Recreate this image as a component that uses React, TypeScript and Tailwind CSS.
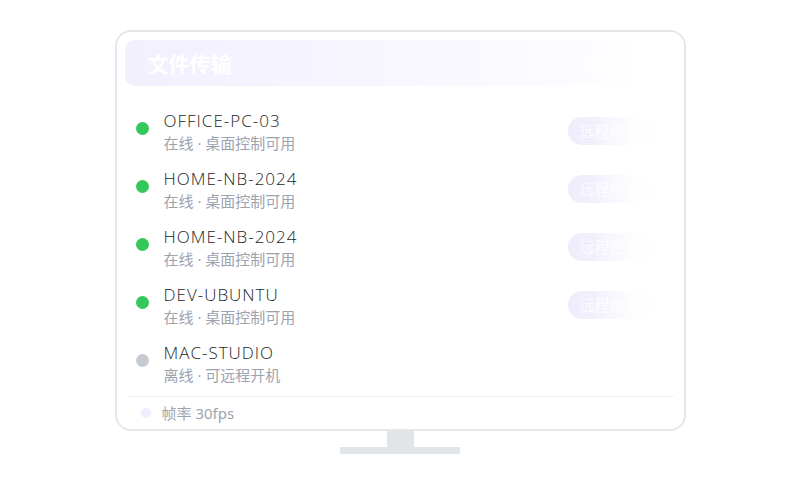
const devices = [
  { name: 'OFFICE-PC-03', online: true },
  { name: 'HOME-NB-2024', online: true },
  { name: 'HOME-NB-2024', online: true },
  { name: 'DEV-UBUNTU', online: true },
  { name: 'MAC-STUDIO', online: false },
];

const font = { fontFamily: '"Noto Sans", "Noto Sans CJK SC", sans-serif' };

export default function App() {
  return (
    <div className="w-[800px] h-[500px] bg-white flex flex-col items-center pt-[30px]" style={font}>
      <div className="relative w-[571px] h-[401px] border-2 border-[#e5e7eb] rounded-[16px] bg-white flex flex-col px-[8px] pt-[8px] overflow-hidden">
        <div className="h-[46px] rounded-[10px] bg-gradient-to-r from-[#f3f0fe] via-[#f8f6ff] to-white flex items-center justify-between pl-[23px] pr-[10px] pt-[3px] shrink-0">
          <span className="text-white font-bold text-[21px] leading-none">文件传输</span>
          <span className="text-white/60 font-bold text-[18px] leading-none border-r border-[#f3f3f6] pr-[10px]">文件传输</span>
        </div>

        <div className="flex flex-col mt-[16px]">
          {devices.map((d, i) => (
            <div key={i} className="h-[58px] flex items-center pl-[11px] pr-[30px]">
              <div className="flex items-start flex-1">
                <span
                  className={`w-[13px] h-[13px] rounded-full mt-[12px] shrink-0 ${d.online ? 'bg-[#34c759]' : 'bg-[#c6cbd1]'}`}
                />
                <div className="ml-[15px] flex flex-col">
                  <span className="text-[17px] leading-[22px] text-[#1c1f25] tracking-[1px] font-light" style={{ fontFamily: '"Open Sans", "Noto Sans", sans-serif' }}>{d.name}</span>
                  <span className="text-[15px] leading-[20px] mt-[1px] text-[#9ca3af]">
                    {d.online ? '在线 · 桌面控制可用' : '离线 · 可远程开机'}
                  </span>
                </div>
              </div>
              {d.online && (
                <div className="h-[28px] w-[86px] rounded-full bg-gradient-to-r from-[#efecfc] to-[#f8f7ff] flex items-center pl-[12px] text-white text-[15px] mr-[-8px]" style={{ fontFamily: '"Noto Serif CJK SC", "Noto Sans CJK SC", serif' }}>
                  远程控制
                </div>
              )}
            </div>
          ))}
        </div>

        <div className="mt-auto border-t border-[#eef0f3] h-[33px] flex items-center pl-[14px] mx-[2px]">
          <span className="w-[10px] h-[10px] rounded-full bg-[#efedfd]" />
          <span className="ml-[11px] text-[15px] text-[#9ca3af]">帧率 30fps</span>
        </div>

        <div className="absolute top-0 bottom-[40px] right-0 w-[92px] bg-gradient-to-r from-white/0 via-white/90 to-white pointer-events-none" />
      </div>
      <div className="w-[27px] h-[16px] bg-[#e1e5e9]" />
      <div className="w-[120px] h-[7px] bg-[#e1e5e9]" />
    </div>
  );
}
